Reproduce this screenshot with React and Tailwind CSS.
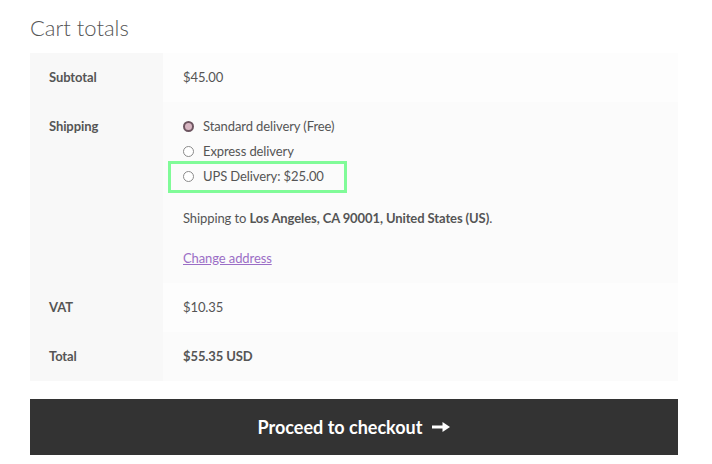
const rows = [
  { label: "Subtotal", value: "$45.00" },
];

function Radio({ checked }) {
  if (checked) {
    return (
      <span className="flex h-[11px] w-[11px] shrink-0 items-center justify-center rounded-full border-2 border-[#6d5560] bg-[#d8b6c2]" />
    );
  }
  return <span className="h-[11px] w-[11px] shrink-0 rounded-full border border-[#8a8a8a] bg-white" />;
}

export default function App() {
  return (
    <div className="min-h-[464px] w-[712px] bg-white px-[30px] pt-[13px] text-[#555] font-['Lato','Noto_Sans',sans-serif]">
      <h2 className="text-[22px] font-light leading-[30px] text-[#555]">Cart totals</h2>

      <table className="mt-[10px] w-[648px] border-collapse text-[13px] tracking-[-0.1px]">
        <tbody>
          {rows.map((r) => (
            <tr key={r.label} className="h-[49px]">
              <th className="w-[133px] bg-[#f8f8f8] pl-[19px] text-left font-bold text-[#555]">{r.label}</th>
              <td className="bg-[#fdfdfd] pl-[20px]">{r.value}</td>
            </tr>
          ))}
          <tr className="h-[181px]">
            <th className="bg-[#f8f8f8] pl-[19px] pt-[15px] text-left align-top font-bold">Shipping</th>
            <td className="bg-[#fbfbfb] pl-[20px] pt-[12px] align-top">
              <ul className="flex flex-col">
                <li className="flex h-[25px] items-center gap-[9px]">
                  <Radio checked />
                  <span>Standard delivery (Free)</span>
                </li>
                <li className="flex h-[25px] items-center gap-[9px]">
                  <Radio />
                  <span>Express delivery</span>
                </li>
                <li className="relative flex h-[25px] items-center gap-[9px]">
                  <Radio />
                  <span>UPS Delivery: $25.00</span>
                  <span className="pointer-events-none absolute -left-[15px] -top-[3px] h-[32px] w-[179px] border-[3px] border-[#80fb98]" />
                </li>
              </ul>
              <p className="mt-[20px]">
                Shipping to <strong className="font-bold">Los Angeles, CA 90001, United States (US)</strong>.
              </p>
              <a href="#" className="mt-[20px] inline-block text-[#9b6ec6] underline">Change address</a>
            </td>
          </tr>
          <tr className="h-[49px]">
            <th className="bg-[#f8f8f8] pl-[19px] text-left font-bold">VAT</th>
            <td className="bg-[#fdfdfd] pl-[20px]">$10.35</td>
          </tr>
          <tr className="h-[49px]">
            <th className="bg-[#f8f8f8] pl-[19px] text-left font-bold">Total</th>
            <td className="bg-[#fbfbfb] pl-[20px] font-bold">$55.35 USD</td>
          </tr>
        </tbody>
      </table>

      <button className="mt-[18px] flex h-[56px] w-[648px] items-center justify-center gap-[10px] bg-[#333] text-[18px] font-bold text-white">
        Proceed to checkout
        <svg width="18" height="10" viewBox="0 0 18 10" fill="white">
          <rect x="0" y="3.5" width="12" height="3" />
          <path d="M10.5 0 L18 5 L10.5 10 Z" />
        </svg>
      </button>
    </div>
  );
}
